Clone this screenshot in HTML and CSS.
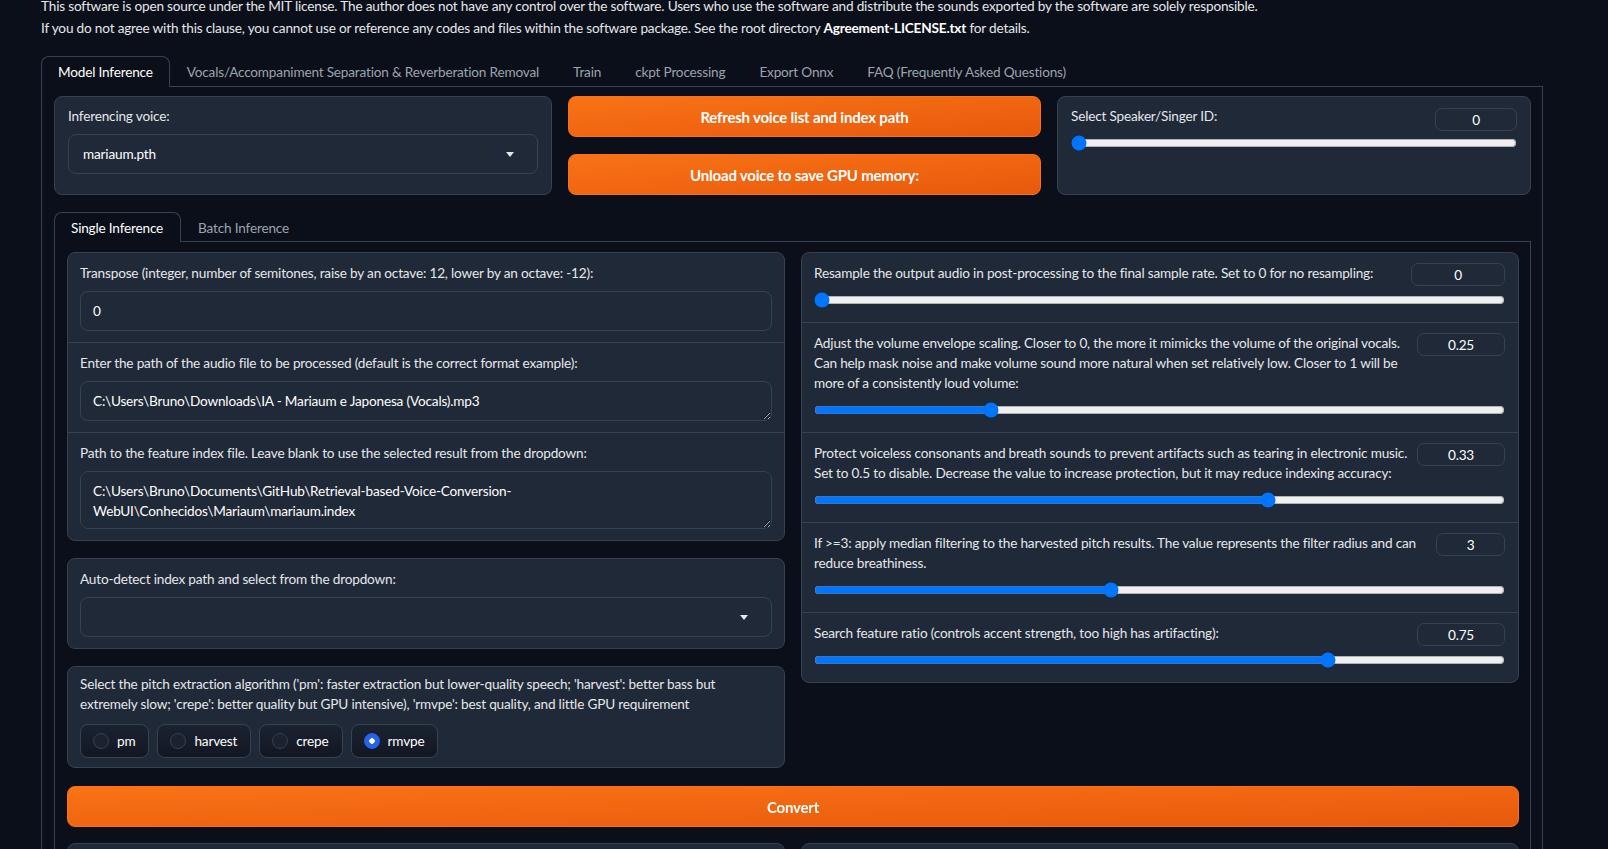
FILE: index.html
```html
<!DOCTYPE html>
<html lang="en">
<head>
    <meta charset="UTF-8">
    <meta name="viewport" content="width=device-width, initial-scale=1.0">
    <title>RVC WebUI</title>
    <link rel="stylesheet" href="styles.css">
</head>
<body>
    <div class="app">
        <div class="notice">
            <p>This software is open source under the MIT license. The author does not have any control over the software. Users who use the software and distribute the sounds exported by the software are solely responsible.</p>
            <p>If you do not agree with this clause, you cannot use or reference any codes and files within the software package. See the root directory <b>Agreement-LICENSE.txt</b> for details.</p>
        </div>

        <div class="tabs outer">
            <div class="tab-nav">
                <button class="tab selected">Model Inference</button>
                <button class="tab">Vocals/Accompaniment Separation &amp; Reverberation Removal</button>
                <button class="tab">Train</button>
                <button class="tab">ckpt Processing</button>
                <button class="tab">Export Onnx</button>
                <button class="tab">FAQ (Frequently Asked Questions)</button>
            </div>
            <div class="tab-panel">
                <div class="top-row">
                    <div class="block field">
                        <span class="label">Inferencing voice:</span>
                        <div class="dropdown">
                            <span>mariaum.pth</span>
                            <svg class="caret" width="8" height="5" viewBox="0 0 8 5"><polygon points="0,0 8,0 4,5" fill="#e5e7eb"/></svg>
                        </div>
                    </div>
                    <div class="button-col">
                        <button class="primary">Refresh voice list and index path</button>
                        <button class="primary">Unload voice to save GPU memory:</button>
                    </div>
                    <div class="block slider-row speaker">
                        <div class="slider-head">
                            <span class="label">Select Speaker/Singer ID:</span>
                            <input class="number w-82" type="text" value="0">
                        </div>
                        <input class="range" type="range" min="0" max="109" value="0">
                    </div>
                </div>

                <div class="tabs inner">
                    <div class="tab-nav">
                        <button class="tab selected">Single Inference</button>
                        <button class="tab">Batch Inference</button>
                    </div>
                    <div class="tab-panel">
                        <div class="columns">
                            <div class="col">
                                <div class="block group">
                                    <div class="field">
                                        <span class="label">Transpose (integer, number of semitones, raise by an octave: 12, lower by an octave: -12):</span>
                                        <input class="text-input" type="text" value="0">
                                    </div>
                                    <div class="field">
                                        <span class="label">Enter the path of the audio file to be processed (default is the correct format example):</span>
                                        <textarea class="text-area one-line">C:\Users\Bruno\Downloads\IA - Mariaum e Japonesa (Vocals).mp3</textarea>
                                    </div>
                                    <div class="field">
                                        <span class="label">Path to the feature index file. Leave blank to use the selected result from the dropdown:</span>
                                        <textarea class="text-area two-lines">C:\Users\Bruno\Documents\GitHub\Retrieval-based-Voice-Conversion-
WebUI\Conhecidos\Mariaum\mariaum.index</textarea>
                                    </div>
                                </div>

                                <div class="block field">
                                    <span class="label">Auto-detect index path and select from the dropdown:</span>
                                    <div class="dropdown">
                                        <span></span>
                                        <svg class="caret" width="8" height="5" viewBox="0 0 8 5"><polygon points="0,0 8,0 4,5" fill="#e5e7eb"/></svg>
                                    </div>
                                </div>

                                <div class="block field radio-field">
                                    <span class="label">Select the pitch extraction algorithm ('pm': faster extraction but lower-quality speech; 'harvest': better bass but extremely slow; 'crepe': better quality but GPU intensive), 'rmvpe': best quality, and little GPU requirement</span>
                                    <div class="radio-group">
                                        <label class="radio"><span class="dot"></span>pm</label>
                                        <label class="radio"><span class="dot"></span>harvest</label>
                                        <label class="radio"><span class="dot"></span>crepe</label>
                                        <label class="radio"><span class="dot checked"></span>rmvpe</label>
                                    </div>
                                </div>
                            </div>

                            <div class="col">
                                <div class="block group">
                                    <div class="slider-row">
                                        <div class="slider-head">
                                            <span class="label">Resample the output audio in post-processing to the final sample rate. Set to 0 for no resampling:</span>
                                            <input class="number w-94" type="text" value="0">
                                        </div>
                                        <input class="range" type="range" min="0" max="48000" value="0">
                                    </div>
                                    <div class="slider-row">
                                        <div class="slider-head">
                                            <span class="label">Adjust the volume envelope scaling. Closer to 0, the more it mimicks the volume of the original vocals. Can help mask noise and make volume sound more natural when set relatively low. Closer to 1 will be more of a consistently loud volume:</span>
                                            <input class="number w-88" type="text" value="0.25">
                                        </div>
                                        <input class="range" type="range" min="0" max="1" step="0.01" value="0.25">
                                    </div>
                                    <div class="slider-row">
                                        <div class="slider-head">
                                            <span class="label">Protect voiceless consonants and breath sounds to prevent artifacts such as tearing in electronic music. Set to 0.5 to disable. Decrease the value to increase protection, but it may reduce indexing accuracy:</span>
                                            <input class="number w-88" type="text" value="0.33">
                                        </div>
                                        <input class="range" type="range" min="0" max="0.5" step="0.01" value="0.33">
                                    </div>
                                    <div class="slider-row">
                                        <div class="slider-head">
                                            <span class="label">If &gt;=3: apply median filtering to the harvested pitch results. The value represents the filter radius and can reduce breathiness.</span>
                                            <input class="number w-69" type="text" value="3">
                                        </div>
                                        <input class="range" type="range" min="0" max="7" step="1" value="3">
                                    </div>
                                    <div class="slider-row">
                                        <div class="slider-head">
                                            <span class="label">Search feature ratio (controls accent strength, too high has artifacting):</span>
                                            <input class="number w-88" type="text" value="0.75">
                                        </div>
                                        <input class="range" type="range" min="0" max="1" step="0.01" value="0.75">
                                    </div>
                                </div>
                            </div>
                        </div>

                        <button class="primary convert">Convert</button>

                        <div class="columns">
                            <div class="block stub"></div>
                            <div class="block stub"></div>
                        </div>
                    </div>
                </div>
            </div>
        </div>
    </div>
</body>
</html>
```

FILE: styles.css
```css
* {
    box-sizing: border-box;
}

html, body {
    margin: 0;
    padding: 0;
}

body {
    background: #0b0f19;
    color: #e5e7eb;
    font-family: Lato, "Noto Sans", sans-serif;
    font-size: 13.6px;
    letter-spacing: -0.18px;
    height: 849px;
    overflow: hidden;
}

.app {
    width: 1502px;
    margin-left: 41px;
}

.notice {
    margin-top: -5px;
    line-height: 22px;
    color: #e5e7eb;
}

.notice p {
    margin: 0;
}

.notice b {
    color: #fff;
}

/* tabs */
.tabs.outer {
    margin-top: 17px;
}

.tab-nav {
    display: flex;
    height: 31px;
    border-bottom: 1px solid #374151;
}

.tab {
    height: 31px;
    margin-bottom: -1px;
    padding: 0 16px;
    background: none;
    border: 1px solid transparent;
    border-bottom: none;
    border-radius: 8px 8px 0 0;
    color: #9ca3af;
    font: inherit;
    letter-spacing: inherit;
    cursor: pointer;
}

.tab.selected {
    color: #fff;
    background: #0b0f19;
    border-color: #374151;
}

.tab-panel {
    border: 1px solid #374151;
    border-top: none;
    padding: 9px 11px 0 12px;
}

.tabs.inner {
    margin-top: 17px;
}

.tabs.inner .tab-nav {
    height: 30px;
}

.tabs.inner .tab {
    height: 30px;
    padding: 0 17px 0 16px;
}

.tabs.inner .tab-panel {
    padding: 10px 11px 0 12px;
}

/* blocks */
.block {
    background: #1f2937;
    border: 1px solid #374151;
    border-radius: 8px;
}

.label {
    display: block;
    line-height: 20px;
    color: #e5e7eb;
}

.field {
    display: flex;
    flex-direction: column;
    gap: 8px;
    padding: 10px 12px 11px 12px;
}

.top-row {
    display: grid;
    grid-template-columns: 498fr 473fr 474fr;
    gap: 16px;
    height: 99px;
}

.top-row .field {
    padding: 9px 13px;
}

.button-col {
    display: flex;
    flex-direction: column;
    justify-content: space-between;
}

.primary {
    height: 41px;
    width: 100%;
    border: 1px solid #f97316;
    border-radius: 8px;
    background: linear-gradient(to bottom right, #f97316, #e8590c);
    color: #fff;
    font: inherit;
    font-size: 15px;
    font-weight: 700;
    letter-spacing: -0.2px;
    cursor: pointer;
}

.dropdown {
    display: flex;
    align-items: center;
    justify-content: space-between;
    height: 40px;
    padding: 0 23px 0 14px;
    border: 1px solid #374151;
    border-radius: 8px;
    background: #1f2937;
    color: #fff;
}

.text-input,
.text-area {
    width: 100%;
    border: 1px solid #374151;
    border-radius: 8px;
    background: #1f2937;
    color: #fff;
    font: inherit;
    letter-spacing: inherit;
    padding: 0 12px;
    outline: none;
}

.text-input {
    height: 40px;
}

.text-area {
    display: block;
    line-height: 20px;
    padding: 9px 12px;
    resize: vertical;
}

.text-area.one-line {
    height: 40px;
}

.text-area.two-lines {
    height: 58px;
}

/* columns */
.columns {
    display: grid;
    grid-template-columns: 1fr 1fr;
    gap: 16px;
    align-items: start;
}

.col {
    display: flex;
    flex-direction: column;
    gap: 17px;
}

.group > * + * {
    border-top: 1px solid #374151;
}

/* radios */
.radio-field {
    padding: 7px 12px 9px 12px;
    gap: 10px;
}

.radio-group {
    display: flex;
    gap: 8px;
}

.radio {
    display: flex;
    align-items: center;
    gap: 8px;
    height: 34px;
    padding: 0 13px 0 12px;
    border: 1px solid #374151;
    border-radius: 8px;
    background: linear-gradient(to bottom, #1b2230, #121722);
    color: #fff;
}

.dot {
    width: 16px;
    height: 16px;
    border-radius: 50%;
    border: 1px solid #374151;
    background: #1b2230;
}

.dot.checked {
    border-color: #2563eb;
    background: radial-gradient(circle, #fff 0 2.5px, #2563eb 3px);
}

/* sliders */
.slider-row {
    padding: 10px 13px 14px 12px;
}

.slider-head {
    display: flex;
    align-items: flex-start;
    gap: 4px;
}

.slider-head .label {
    flex: 1;
    padding-bottom: 3px;
}

.number {
    height: 23px;
    flex-shrink: 0;
    border: 1px solid #374151;
    border-radius: 7px;
    background: #1f2937;
    color: #fff;
    font: inherit;
    letter-spacing: inherit;
    text-align: center;
    outline: none;
}

.w-94 { width: 94px; }
.w-88 { width: 88px; }
.w-82 { width: 82px; }
.w-69 { width: 69px; }

.range {
    display: block;
    width: 100%;
    height: 16px;
    margin: 6px 0 0 0;
}

.speaker {
    padding: 11px 13px 0 13px;
}

.speaker .slider-head .label {
    margin-top: -2px;
}

.speaker .range {
    margin-top: 4px;
}

.convert {
    display: block;
    margin: 18px 0 16px 0;
    font-size: 15px;
}

.stub {
    height: 40px;
}
```
